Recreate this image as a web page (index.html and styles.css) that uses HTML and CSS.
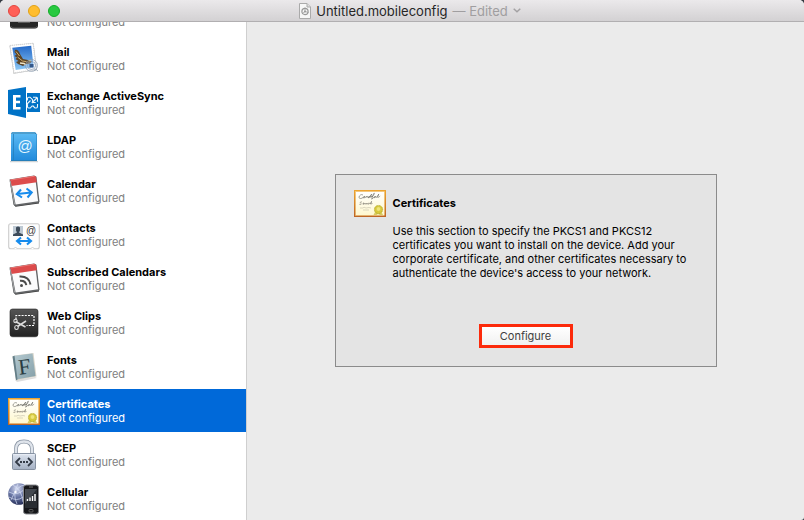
FILE: index.html
```html
<!DOCTYPE html>
<html lang="en">
<head>
<meta charset="utf-8">
<title>Untitled.mobileconfig</title>
<link rel="stylesheet" href="styles.css">
</head>
<body>
<svg class="defs" width="0" height="0" aria-hidden="true">
  <defs>
    <linearGradient id="blue" x2="0" y2="1"><stop stop-color="#59b9f3"/><stop offset="1" stop-color="#228bdc"/></linearGradient>
    <linearGradient id="sky" x2="0" y2="1"><stop stop-color="#2469c8"/><stop offset="1" stop-color="#8cc8f6"/></linearGradient>
    <linearGradient id="dark" x2="0" y2="1"><stop stop-color="#555"/><stop offset="1" stop-color="#222"/></linearGradient>
    <linearGradient id="gold" x2="0" y2="1"><stop stop-color="#eda531"/><stop offset="1" stop-color="#bd6424"/></linearGradient>
    <linearGradient id="paper" x2="0" y2="1"><stop stop-color="#fff"/><stop offset="1" stop-color="#fff8cf"/></linearGradient>
    <linearGradient id="steel" x2="0" y2="1"><stop stop-color="#dde4ef"/><stop offset="1" stop-color="#a4b0c3"/></linearGradient>
    <linearGradient id="book" x2="1" y2="1"><stop stop-color="#b6cbd2"/><stop offset="1" stop-color="#849fa8"/></linearGradient>
    <radialGradient id="globe" cx=".4" cy=".25" r=".75"><stop stop-color="#d5daf0"/><stop offset=".5" stop-color="#6d7aa8"/><stop offset="1" stop-color="#28315c"/></radialGradient>
    <symbol id="i-cert" viewBox="0 0 32 32">
      <rect x="0" y="4" width="32" height="27" fill="url(#gold)"/>
      <rect x="1.700" y="5.700" width="28.600" height="23.600" fill="url(#paper)" stroke="#f5d48c" stroke-width=".5"/>
      <path d="M9 9c-1.500-1.200-4 .5-4 2.200 0 2 3 1.600 4.300 0 .8-1.200 2-.8 1.500.2s-1.700.9-1.400 0 1.600-.6 2.400 0l1-1.200.2 1.200c.7-1.400 1.300-1.300 1.300 0 .6-1.300 2-1.200 1.300 0s-1.600.4-.8-.4c1.200-.7 2.600-2 2.800-3l-1.400 3.300 1.700-1.300v1.200c.8-.6 2.700-3.200 2.400-4s-2.300 3.700-2.600 6c1-.6 1.700-1.600 2.500-2.200 1-.8 1.800-.4 1.200.2s-1.500.7-1.100 0 1.800-.5 2.300.2l2.200-3.300-1.300 3.200c1 .6 2-.8 2.700-1.300" fill="none" stroke="#4a4a45" stroke-width=".5"/>
      <path d="M8 16c-1.600-.5-2.400.7-1.200 1.300s.2 1.700-1.500 1m3.500 0c1.400-1.200 1.500-1.500.7-1.400s-.7 1.600.4 1.400l1.200-1.300.2 1.300 1.300-1.300.2 1.300 1.500-1.300v1.300l1.400-1.200.4 1 1.500-2.800-.8 2.800 1.700-.6" fill="none" stroke="#66625a" stroke-width=".5"/>
      <path d="M6 22h3l1-.8 2 .8 3-.5 2 .5M9 24h6" fill="none" stroke="#b5b09c" stroke-width=".5"/>
      <path d="m21 26-1.500 3h3l1.500-1 2 1h3l-2-4z" fill="#d9cd62"/>
      <circle cx="24.500" cy="23.500" r="4.100" fill="#d8ca38" stroke="#aaa02a" stroke-width=".8" stroke-dasharray="1 .6"/>
      <circle cx="24.500" cy="23" r="2.300" fill="#efe675" stroke="#cabe45" stroke-width=".5"/>
    </symbol>
    <symbol id="i-cal" viewBox="0 0 32 33">
      <path d="M2 8 6 31l1.500 1.700L31 29.500V28z" fill="#3b3b3b"/>
      <path d="m1.500 5.500 24.500-4 2.500 1.200 3 25-1 1.300-23 3.200-2-1.500z" fill="#626466"/>
      <path d="M3.500 9.500 27.500 6l2.600 21.200-22.500 3.300z" fill="#fbfbfc"/>
      <path d="m2 5.700 24.300-4 1.700 1.100.8 5.500L3.300 12z" fill="#dc4b4b"/>
      <path d="m2.500 6 24-3.800" stroke="#f58a86" stroke-width=".7"/>
      <path d="m2.200 7 4.500 23.500" stroke="#a0a2a4" stroke-width="1"/>
    </symbol>
  </defs>
</svg>

<div class="window">
  <header class="titlebar">
    <div class="lights">
      <button class="light close" aria-label="Close"></button>
      <button class="light minimize" aria-label="Minimize"></button>
      <button class="light zoom" aria-label="Zoom"></button>
    </div>
    <h1 class="title">
      <svg class="doc-icon" viewBox="0 0 12 16" aria-hidden="true">
        <path d="M.5.500h7.500l3.500 3.500v11.500H.5z" fill="#f7f7f7" stroke="#aaa"/><path d="M8 .5V4h3.500" fill="#ddd" stroke="#aaa"/>
        <circle cx="6" cy="8.500" r="3.100" fill="none" stroke="#999" stroke-width="1.200"/><circle cx="6" cy="8.500" r="1" fill="#999"/><path d="M6 4.500v4l3.500 1M6 8.500l-3 2.500" stroke="#999" fill="none" stroke-width=".8"/>
      </svg>
      <span>Untitled.mobileconfig</span>
      <button class="edited">— Edited
        <svg class="chevron" viewBox="0 0 8 5" aria-hidden="true"><path d="m.7.8 3.300 3 3.300-3" fill="none" stroke="#a3a1a3" stroke-width="1.500"/></svg>
      </button>
    </h1>
  </header>

  <div class="body">
    <nav class="sidebar">
      <ul class="list">
        <li class="item cut">
          <svg class="icon" viewBox="0 0 32 32"><rect x="2" y="3" width="28" height="28.500" rx="3" fill="#272727"/><path d="M3 29.500q1 1.500 3 1.500h20q2 0 3-1.500" stroke="#777" fill="none" stroke-width=".7"/><path d="M10 24.500h12" stroke="#fff" stroke-width="1.500"/></svg>
          <div class="label"><span>Not configured</span></div>
        </li>
        <li class="item">
          <svg class="icon" viewBox="0 0 32 32">
            <path d="m1.500 3.500 24-2.500 3.500 27-23.500 3.800z" fill="#b9bbbd"/>
            <path d="m2 3.500 23.200-2.200 3 26.200L6 31z" fill="#fff" stroke="#d5d5d5" stroke-width="1.200" stroke-dasharray="1.200 .8"/>
            <path d="m4.300 5.700 18.900-1.900 2.500 21.400L7.700 28z" fill="url(#sky)"/>
            <path d="M7 8c2-1 4 1 5 4l3 5 5 1 4 1.500-2 2-4 .5-3 2-5-2-2-2 2.500-1-3-2 1.500-1.500-2.500-1.500 2-1.500L6.500 10z" fill="#5d4526"/>
            <path d="m8 9.500 3.500 4.500m-2 1 5 4 4 .7" stroke="#d0ad6c" stroke-width="1" fill="none"/><path d="m12 21 4 .5 2 1.500" stroke="#efe4c6" stroke-width="1.500" fill="none"/><path d="m20 18 3 .5-1 1z" fill="#ecd55c"/>
            <circle cx="23.500" cy="23.500" r="6" fill="#d7e5f3" fill-opacity=".25" stroke="#8494a8" stroke-opacity=".8" stroke-width=".8"/><circle cx="23.500" cy="23.500" r="4" fill="none" stroke="#8393a8" stroke-width=".6"/><path d="M21.500 22h4v3.500h-4z" fill="#35598b"/><path d="M26 28q3-1 4 1" stroke="#8796a6" stroke-width=".7" fill="none"/>
          </svg>
          <div class="label"><b>Mail</b><span>Not configured</span></div>
        </li>
        <li class="item">
          <svg class="icon" viewBox="0 0 32 32">
            <path d="M0 4 18 1v31L0 28z" fill="#0072c6"/><path d="M19 7h13v19H19z" fill="#0072c6"/>
            <path d="M5 9h7.500v2.500H8v3.300h4v2.500H8v3.700h4.500v2.500H5z" fill="#fff"/>
            <path d="M19.500 14.500v-2q0-1.300 1.300-1.300H22l2.500 2.500M25 11.200h3.300q1.200 0 1.200 1.300v3.200M23.800 17l5-5M24.500 13.300v3.200h3.200M29.500 18v2.500q0 1.500-1.300 1.500H27l-2.500-2.500M19.500 18.200v2.600q0 1.200 1.200 1.200h1.500l2-2.200M19 18l3.500-3.500" fill="none" stroke="#e9f4fc" stroke-width="1.100"/>
          </svg>
          <div class="label"><b>Exchange ActiveSync</b><span>Not configured</span></div>
        </li>
        <li class="item">
          <svg class="icon" viewBox="0 0 32 32">
            <path d="M2 31h28v1.200H2z" fill="#cfd3d5"/><path d="m4 2h23l2 2.500V31H3V4z" fill="#267eb9"/><path d="M3 4h25.500v26H3z" fill="url(#blue)"/><path d="M5.500 4v26" stroke="#237fbb" stroke-width=".8"/><path d="M4 3h23" stroke="#8ed2ef" stroke-width=".8"/>
            <text x="17" y="20.500" class="at at-light">@</text>
          </svg>
          <div class="label"><b>LDAP</b><span>Not configured</span></div>
        </li>
        <li class="item">
          <svg class="icon" viewBox="0 0 32 32"><use href="#i-cal" width="32" height="33"/><path d="M9.500 20 23 18.500M13 15.500 8.800 20l5.200 3.500m4.500-9 5.200 4-4.200 5" fill="none" stroke="#168bed" stroke-width="2.100"/></svg>
          <div class="label"><b>Calendar</b><span>Not configured</span></div>
        </li>
        <li class="item">
          <svg class="icon" viewBox="0 0 32 32">
            <rect x=".7" y="5.700" width="30.600" height="25" rx="2" fill="#fdfdfd" stroke="#ccc" stroke-width="1.100"/><path d="m5.500 31 2-2 2 2m13 0 2-2 2 2" fill="#fff" stroke="#c5c5c5" stroke-width=".8"/>
            <path d="M5 8h10v10H5z" fill="#bec9d3"/><path d="M8 9.500q2-2 4 0v3l-1 2 4 2V18H5v-1.500l4-2-1-2z" fill="#3d4b5a"/>
            <text x="23" y="16" class="at at-dark">@</text>
            <path d="M9.500 23h13M13 19.500 9 23l4 3.500m6-7 4 3.500-4 3.500" fill="none" stroke="#168bed" stroke-width="2.100"/>
          </svg>
          <div class="label"><b>Contacts</b><span>Not configured</span></div>
        </li>
        <li class="item">
          <svg class="icon" viewBox="0 0 32 32"><use href="#i-cal" width="32" height="33"/><circle cx="13.500" cy="23.500" r="1.500" fill="#4b4b4b"/><path d="M12 18.800q5.500-.5 6.300 4.300M11.500 14.500q9.500-.5 11 8" fill="none" stroke="#4b4b4b" stroke-width="2"/></svg>
          <div class="label"><b>Subscribed Calendars</b><span>Not configured</span></div>
        </li>
        <li class="item">
          <svg class="icon" viewBox="0 0 32 32">
            <rect x="2" y="3.500" width="28" height="28" rx="3" fill="#bbb"/><rect x="2" y="3" width="28" height="27.500" rx="2.500" fill="url(#dark)" stroke="#222" stroke-width=".6"/>
            <path d="M8 13.500v-4h18v10h-7.500" fill="none" stroke="#fff" stroke-width="1.200" stroke-dasharray="2 1.200"/>
            <path d="m7.500 15.500 10 5.500m-8-.5 8.500-5.500" stroke="#ddd" stroke-width="1.500"/><circle cx="7.500" cy="15" r="1.700" fill="none" stroke="#ddd" stroke-width="1.100"/><ellipse cx="8.500" cy="21.500" rx="1.800" ry="2" fill="none" stroke="#ddd" stroke-width="1.100"/>
          </svg>
          <div class="label"><b>Web Clips</b><span>Not configured</span></div>
        </li>
        <li class="item">
          <svg class="icon" viewBox="0 0 32 32">
            <path d="m7 30 20-3 2 1-20 4z" fill="#ddd"/><path d="m4.500 6.500 2-1 19-2.500 3 23.500-20.500 4z" fill="#d8d5ca"/><path d="m5 6 19.500-2.500L27.500 26 8 29.500z" fill="url(#book)"/><path d="m4.500 6.500 2-.7L9.500 29.500 8 30.200z" fill="#647e87"/>
            <text x="16.500" y="24" class="letter" transform="rotate(-7 16 18)">F</text>
          </svg>
          <div class="label"><b>Fonts</b><span>Not configured</span></div>
        </li>
        <li class="item selected" aria-current="true">
          <svg class="icon" viewBox="0 0 32 32"><use href="#i-cert" width="32" height="32"/></svg>
          <div class="label"><b>Certificates</b><span>Not configured</span></div>
        </li>
        <li class="item">
          <svg class="icon" viewBox="0 0 32 32">
            <path d="M8 17v-6q0-7.500 8-7.500t8 7.500v6" fill="none" stroke="#8792a1" stroke-width="3.800"/><path d="M8 17v-6q0-7.500 8-7.500t8 7.500v6" fill="none" stroke="#dfe4eb" stroke-width="2.400"/>
            <rect x="4.500" y="15.500" width="23" height="16" rx="1" fill="url(#steel)" stroke="#7d899a" stroke-width=".9"/><path d="M5.500 16.700h21" stroke="#f1f5fb" stroke-width=".7"/>
            <path d="m12 20-4 4 4 4m8-8 4 4-4 4" fill="none" stroke="#333b47" stroke-width="1.800"/><path d="M12 24h8" stroke="#333b47" stroke-width="1.800" stroke-dasharray="2 1"/>
          </svg>
          <div class="label"><b>SCEP</b><span>Not configured</span></div>
        </li>
        <li class="item">
          <svg class="icon" viewBox="0 0 32 32">
            <circle cx="11" cy="12" r="10.800" fill="url(#globe)"/><path d="M1 10q8 5 17-4M3 18Q9 3 17 3M5 3q9 5 10 17M1 15q8 5 14 0M10 2Q4 12 9 22" fill="none" stroke="#d5def5" stroke-width=".7"/><circle cx="7.500" cy="10" r="1.200" fill="#fff"/>
            <rect x="15.500" y="3" width="15" height="29" rx="2.600" fill="#16171a" stroke="#8b8d91" stroke-width="1"/><path d="M17 7h12v19H17z" fill="#292d32"/><path d="M17 7h12L17 22z" fill="#444950"/><path d="M19.500 19v-2m2.500 2v-3.500m2.500 3.500v-5m2.500 5v-7" stroke="#fff" stroke-width="1.400"/><path d="M21 5h4" stroke="#888" stroke-width=".8"/><rect x="21" y="27.500" width="4" height="2.500" rx=".8" fill="none" stroke="#777" stroke-width=".7"/>
          </svg>
          <div class="label"><b>Cellular</b><span>Not configured</span></div>
        </li>
      </ul>
    </nav>

    <main class="content">
      <section class="panel">
        <div class="panel-head">
          <svg class="panel-icon" viewBox="0 4 32 27" aria-hidden="true"><use href="#i-cert" width="32" height="32"/></svg>
          <h2>Certificates</h2>
        </div>
        <p>Use this section to specify the PKCS1 and PKCS12 certificates you want to install on the device. Add your corporate certificate, and other certificates necessary to authenticate the device's access to your network.</p>
        <button class="configure">Configure</button>
      </section>
    </main>
  </div>
</div>
</body>
</html>
```
FILE: styles.css
```css
* { box-sizing: border-box; }

body {
  margin: 0;
  background: #343941;
  color: #000;
  font: 11px/14px Inter, "Liberation Sans", sans-serif;
}

button {
  margin: 0;
  padding: 0;
  border: 0;
  background: none;
  font: inherit;
  color: inherit;
}

.defs { position: absolute; }

.window {
  display: flex;
  flex-direction: column;
  height: 100vh;
  overflow: hidden;
  border-radius: 5px 5px 3px 0;
  background: #ebebeb;
}

.titlebar {
  display: grid;
  grid-template-columns: 1fr auto 1fr;
  align-items: center;
  flex: none;
  height: 22px;
  padding: 0 8px;
  border-bottom: 1px solid #b1afb1;
  background: linear-gradient(#ebe9eb, #d3d1d3);
}

.lights { display: flex; gap: 8px; }

.light {
  width: 12px;
  height: 12px;
  border: 1px solid;
  border-radius: 50%;
}

.close { background: #ff5f57; border-color: #e2463f; }
.minimize { background: #ffbd2e; border-color: #e1a116; }
.zoom { background: #28c940; border-color: #12ac28; }

.title {
  display: flex;
  align-items: center;
  gap: 5px;
  margin: 0;
  padding-left: 16px;
  font-size: 13px;
  line-height: 20px;
  font-weight: 400;
  color: #262626;
}

.doc-icon { width: 12px; height: 16px; }

.edited {
  display: flex;
  align-items: center;
  gap: 5px;
  color: #a09ea0;
}

.chevron { width: 8px; height: 5px; }

.body { display: flex; flex: 1; min-height: 0; }

.sidebar {
  flex: none;
  width: 247px;
  overflow: hidden;
  border-right: 1px solid #cfcfcf;
  background: #fff;
}

.list { margin: 0; padding: 0; list-style: none; }

.item {
  display: flex;
  gap: 7px;
  height: 44px;
  padding: 5px 8px 0;
  border-bottom: 1px solid #fff;
  background-clip: padding-box;
}

.item.cut {
  align-items: flex-end;
  height: 15px;
  padding: 0 8px 7px;
  overflow: hidden;
}

.icon { flex: none; width: 32px; height: 32px; overflow: visible; }

.label {
  display: flex;
  flex-direction: column;
  padding-top: 3px;
}

.label b { font-weight: 700; }
.label span { color: #808080; }

.selected { background-color: #0069d9; color: #fff; }
.selected .label span { color: #fff; }

.at { font-family: "Liberation Sans", sans-serif; text-anchor: middle; }
.at-light { font-size: 15px; fill: #e6f7ff; }
.at-dark { font-size: 10px; fill: #333; }
.letter { font: 22px "Liberation Serif", serif; text-anchor: middle; fill: #293c43; }

.content {
  display: flex;
  align-items: center;
  justify-content: center;
  flex: 1;
  padding-bottom: 2px;
}

.panel {
  display: flex;
  flex-direction: column;
  width: 382px;
  padding: 15px 18px 18px;
  border: 1px solid #8b8b8b;
  background: #e4e4e4;
}

.panel-head { display: flex; align-items: center; gap: 7px; }
.panel-icon { width: 32px; height: 27px; }
.panel h2 { margin: 0; font-size: 11px; font-weight: 700; }
.panel p { margin: 7px 0 0 39px; }

.configure {
  align-self: center;
  width: 94px;
  height: 24px;
  margin: 44px 0 0 0;
  border: 3px solid #fc2a0b;
  background: linear-gradient(#fff, #f1f1f1);
  color: #404040;
}
```
